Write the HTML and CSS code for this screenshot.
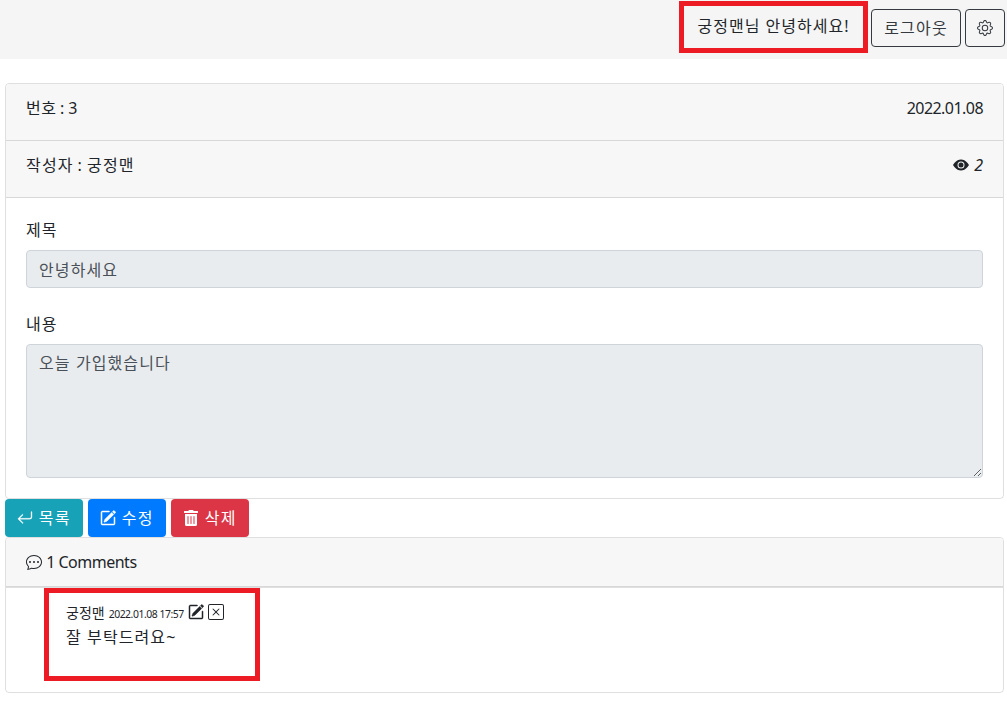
FILE: index.html
```html
<!DOCTYPE html>
<html lang="ko">
<head>
    <meta charset="UTF-8">
    <meta name="viewport" content="width=device-width, initial-scale=1.0">
    <title>게시글</title>
    <link rel="stylesheet" href="styles.css">
</head>
<body>
    <nav class="topbar">
        <div class="greeting">궁정맨님 안녕하세요!</div>
        <a class="btn btn-outline btn-logout" href="#">로그아웃</a>
        <a class="btn btn-outline btn-gear" href="#" aria-label="설정">
            <svg class="icon" viewBox="0 0 16 16"><path d="M8 4.754a3.246 3.246 0 1 0 0 6.492 3.246 3.246 0 0 0 0-6.492zM5.754 8a2.246 2.246 0 1 1 4.492 0 2.246 2.246 0 0 1-4.492 0z"/><path d="M9.796 1.343c-.527-1.79-3.065-1.79-3.592 0l-.094.319a.873.873 0 0 1-1.255.52l-.292-.16c-1.64-.892-3.433.902-2.54 2.541l.159.292a.873.873 0 0 1-.52 1.255l-.319.094c-1.79.527-1.79 3.065 0 3.592l.319.094a.873.873 0 0 1 .52 1.255l-.16.292c-.892 1.64.901 3.434 2.541 2.54l.292-.159a.873.873 0 0 1 1.255.52l.094.319c.527 1.79 3.065 1.79 3.592 0l.094-.319a.873.873 0 0 1 1.255-.52l.292.16c1.64.893 3.434-.902 2.54-2.541l-.159-.292a.873.873 0 0 1 .52-1.255l.319-.094c1.79-.527 1.79-3.065 0-3.592l-.319-.094a.873.873 0 0 1-.52-1.255l.16-.292c.893-1.64-.902-3.433-2.541-2.54l-.292.159a.873.873 0 0 1-1.255-.52l-.094-.319zm-2.633.283c.246-.835 1.428-.835 1.674 0l.094.319a1.873 1.873 0 0 0 2.693 1.115l.291-.16c.764-.415 1.6.42 1.184 1.185l-.159.292a1.873 1.873 0 0 0 1.116 2.692l.318.094c.835.246.835 1.428 0 1.674l-.319.094a1.873 1.873 0 0 0-1.115 2.693l.16.291c.415.764-.42 1.6-1.185 1.184l-.291-.159a1.873 1.873 0 0 0-2.693 1.116l-.094.318c-.246.835-1.428.835-1.674 0l-.094-.319a1.873 1.873 0 0 0-2.692-1.115l-.292.16c-.764.415-1.6-.42-1.184-1.185l.159-.291A1.873 1.873 0 0 0 1.945 8.93l-.319-.094c-.835-.246-.835-1.428 0-1.674l.319-.094A1.873 1.873 0 0 0 3.06 4.377l-.16-.292c-.415-.764.42-1.6 1.185-1.184l.292.159a1.873 1.873 0 0 0 2.692-1.115l.094-.319z"/></svg>
        </a>
    </nav>

    <main class="container">
        <div class="card">
            <div class="card-header row-between">
                <span class="post-no">번호 : 3</span>
                <span class="post-date">2022.01.08</span>
            </div>
            <div class="card-header row-between">
                <span class="post-writer">작성자 : 궁정맨</span>
                <span class="views">
                    <svg class="icon" viewBox="0 0 16 16"><path d="M10.5 8a2.5 2.5 0 1 1-5 0 2.5 2.5 0 0 1 5 0z"/><path d="M0 8s3-5.5 8-5.5S16 8 16 8s-3 5.5-8 5.5S0 8 0 8zm8 3.5a3.5 3.5 0 1 0 0-7 3.5 3.5 0 0 0 0 7z"/></svg>
                    <em>2</em>
                </span>
            </div>
            <div class="card-body">
                <div class="form-group">
                    <label for="title">제목</label>
                    <input class="form-control" id="title" type="text" value="안녕하세요" readonly>
                </div>
                <div class="form-group">
                    <label for="content">내용</label>
                    <textarea class="form-control content-area" id="content" readonly>오늘 가입했습니다</textarea>
                </div>
            </div>
        </div>

        <div class="actions">
            <a class="btn btn-info" href="#">
                <svg class="icon icon-medium" viewBox="0 0 16 16"><path fill-rule="evenodd" d="M14.5 1.5a.5.5 0 0 1 .5.5v4.8a2.5 2.5 0 0 1-2.5 2.5H2.707l3.347 3.346a.5.5 0 0 1-.708.708l-4.2-4.2a.5.5 0 0 1 0-.708l4-4a.5.5 0 1 1 .708.708L2.707 8.3H12.5A1.5 1.5 0 0 0 14 6.8V2a.5.5 0 0 1 .5-.5z"/></svg>
                목록
            </a>
            <a class="btn btn-primary" href="#">
                <svg class="icon icon-bold" viewBox="0 0 16 16"><path d="M15.502 1.94a.5.5 0 0 1 0 .706L14.459 3.69l-2-2L13.502.646a.5.5 0 0 1 .707 0l1.293 1.293zm-1.75 2.456-2-2L4.939 9.21a.5.5 0 0 0-.121.196l-.805 2.414a.25.25 0 0 0 .316.316l2.414-.805a.5.5 0 0 0 .196-.12l6.813-6.814z"/><path fill-rule="evenodd" d="M1 13.5A1.5 1.5 0 0 0 2.5 15h11a1.5 1.5 0 0 0 1.5-1.5v-6a.5.5 0 0 0-1 0v6a.5.5 0 0 1-.5.5h-11a.5.5 0 0 1-.5-.5v-11a.5.5 0 0 1 .5-.5H9a.5.5 0 0 0 0-1H2.5A1.5 1.5 0 0 0 1 2.5v11z"/></svg>
                수정
            </a>
            <a class="btn btn-danger" href="#">
                <svg class="icon" viewBox="0 0 448 512"><path d="M32 464a48 48 0 0 0 48 48h288a48 48 0 0 0 48-48V128H32zm272-256a16 16 0 0 1 32 0v224a16 16 0 0 1-32 0zm-96 0a16 16 0 0 1 32 0v224a16 16 0 0 1-32 0zm-96 0a16 16 0 0 1 32 0v224a16 16 0 0 1-32 0zM432 32H312l-9.4-18.7A24 24 0 0 0 281.1 0H166.8a23.72 23.72 0 0 0-21.4 13.3L136 32H16A16 16 0 0 0 0 48v32a16 16 0 0 0 16 16h416a16 16 0 0 0 16-16V48a16 16 0 0 0-16-16z"/></svg>
                삭제
            </a>
        </div>

        <div class="card">
            <div class="card-header comments-header">
                <svg class="icon" viewBox="0 0 16 16"><path d="M5 8a1 1 0 1 1-2 0 1 1 0 0 1 2 0zm4 0a1 1 0 1 1-2 0 1 1 0 0 1 2 0zm3 1a1 1 0 1 0 0-2 1 1 0 0 0 0 2z"/><path d="m2.165 15.803.02-.004c1.83-.363 2.948-.842 3.468-1.105A9.06 9.06 0 0 0 8 15c4.418 0 8-3.134 8-7s-3.582-7-8-7-8 3.134-8 7c0 1.76.743 3.37 1.97 4.6a10.437 10.437 0 0 1-.524 2.318l-.003.011a10.722 10.722 0 0 1-.244.637c-.079.186.074.394.273.362a21.673 21.673 0 0 0 .693-.125zm.8-3.108a1 1 0 0 0-.287-.801C1.618 10.83 1 9.468 1 8c0-3.192 3.004-6 7-6s7 2.808 7 6c0 3.193-3.004 6-7 6a8.06 8.06 0 0 1-2.088-.272 1 1 0 0 0-.711.074c-.387.196-1.24.57-2.634.893a10.97 10.97 0 0 0 .398-2z"/></svg>
                <span class="comments-count">1 Comments</span>
            </div>
            <div class="comment-list">
                <div class="comment">
                    <div class="comment-meta">
                        <span class="comment-author">궁정맨</span>
                        <small class="comment-date">2022.01.08 17:57</small>
                        <svg class="icon icon-bold" viewBox="0 0 16 16"><path d="M15.502 1.94a.5.5 0 0 1 0 .706L14.459 3.69l-2-2L13.502.646a.5.5 0 0 1 .707 0l1.293 1.293zm-1.75 2.456-2-2L4.939 9.21a.5.5 0 0 0-.121.196l-.805 2.414a.25.25 0 0 0 .316.316l2.414-.805a.5.5 0 0 0 .196-.12l6.813-6.814z"/><path fill-rule="evenodd" d="M1 13.5A1.5 1.5 0 0 0 2.5 15h11a1.5 1.5 0 0 0 1.5-1.5v-6a.5.5 0 0 0-1 0v6a.5.5 0 0 1-.5.5h-11a.5.5 0 0 1-.5-.5v-11a.5.5 0 0 1 .5-.5H9a.5.5 0 0 0 0-1H2.5A1.5 1.5 0 0 0 1 2.5v11z"/></svg>
                        <svg class="icon" viewBox="0 0 16 16"><path d="M14 1a1 1 0 0 1 1 1v12a1 1 0 0 1-1 1H2a1 1 0 0 1-1-1V2a1 1 0 0 1 1-1h12zM2 0a2 2 0 0 0-2 2v12a2 2 0 0 0 2 2h12a2 2 0 0 0 2-2V2a2 2 0 0 0-2-2H2z"/><path d="M4.646 4.646a.5.5 0 0 1 .708 0L8 7.293l2.646-2.647a.5.5 0 0 1 .708.708L8.707 8l2.647 2.646a.5.5 0 0 1-.708.708L8 8.707l-2.646 2.647a.5.5 0 0 1-.708-.708L7.293 8 4.646 5.354a.5.5 0 0 1 0-.708z"/></svg>
                    </div>
                    <p class="comment-text">잘 부탁드려요~</p>
                </div>
            </div>
        </div>
    </main>
</body>
</html>
```

FILE: styles.css
```css
body {
    font-family: "Noto Sans", "Noto Sans CJK KR", sans-serif;
    font-size: 16px;
    line-height: 1.5;
    margin: 0;
    padding: 0;
    background-color: #fff;
    color: #212529;
}
a {
    text-decoration: none;
}
.icon {
    width: 16px;
    height: 16px;
    flex: none;
    fill: currentColor;
    vertical-align: -2px;
}
.icon-bold {
    stroke: currentColor;
    stroke-width: 0.5px;
}
.icon-medium {
    stroke: currentColor;
    stroke-width: 0.3px;
}

.topbar {
    display: flex;
    justify-content: flex-end;
    align-items: flex-start;
    height: 59px;
    box-sizing: border-box;
    padding: 1px 2px 0 0;
    background-color: #f5f5f5;
}
.greeting {
    width: 189px;
    height: 52px;
    box-sizing: border-box;
    border: 5px solid #ed1c24;
    margin-right: 3px;
    text-align: center;
    line-height: 40px;
    letter-spacing: 1px;
}
.btn {
    display: inline-block;
    box-sizing: border-box;
    height: 38px;
    line-height: 36px;
    border: 1px solid transparent;
    border-radius: 4px;
    text-align: center;
    letter-spacing: 1.2px;
    color: #fff;
}
.btn-outline {
    margin-top: 8px;
    border-color: #343a40;
    color: #343a40;
}
.btn-logout {
    width: 90px;
    margin-right: 4px;
}
.btn-gear {
    width: 40px;
}
.btn-info {
    background-color: #17a2b8;
}
.btn-primary {
    background-color: #007bff;
}
.btn-danger {
    background-color: #dc3545;
}

.container {
    padding: 24px 3px 0 5px;
}
.card {
    border: 1px solid rgba(0, 0, 0, 0.125);
    border-radius: 4px;
    overflow: hidden;
}
.card-header {
    box-sizing: border-box;
    padding: 12px 20px;
    background-color: #f7f7f7;
    border-bottom: 1px solid rgba(0, 0, 0, 0.125);
}
.row-between {
    display: flex;
    justify-content: space-between;
    height: 57px;
}
.post-no {
    letter-spacing: 0.65px;
    word-spacing: -1.5px;
}
.post-date {
    letter-spacing: -0.55px;
}
.post-writer {
    letter-spacing: 1.2px;
    word-spacing: -1.5px;
}
.views em {
    margin-left: 1px;
}
.card-body {
    height: 300px;
    box-sizing: border-box;
    padding: 20px;
}
.form-group {
    margin-bottom: 24px;
}
.form-group label {
    display: block;
    margin-bottom: 8px;
    letter-spacing: 1px;
}
.form-control {
    display: block;
    width: 100%;
    height: 38px;
    box-sizing: border-box;
    padding: 6px 12px;
    font: inherit;
    letter-spacing: 1.1px;
    color: #495057;
    background-color: #e9ecef;
    border: 1px solid #ced4da;
    border-radius: 4px;
    outline: none;
}
.content-area {
    height: 134px;
}

.actions {
    display: flex;
    gap: 5px;
}
.actions .btn {
    width: 78px;
}

.comments-header {
    height: 49px;
    padding-top: 12px;
}
.comments-count {
    letter-spacing: -0.5px;
}
.comment-list {
    border-top: 1px solid rgba(0, 0, 0, 0.125);
    padding: 0 0 11px 38px;
}
.comment {
    width: 216px;
    height: 93px;
    box-sizing: border-box;
    border: 5px solid #ed1c24;
    padding: 7px 17px;
}
.comment-meta {
    display: flex;
    align-items: center;
    gap: 4px;
    height: 24px;
    font-size: 14px;
    white-space: nowrap;
}
.comment-date {
    padding-top: 5px;
    font-size: 10.4px;
    letter-spacing: -0.45px;
}
.comment-text {
    margin: 1px 0 0;
    letter-spacing: 1.1px;
}
```
